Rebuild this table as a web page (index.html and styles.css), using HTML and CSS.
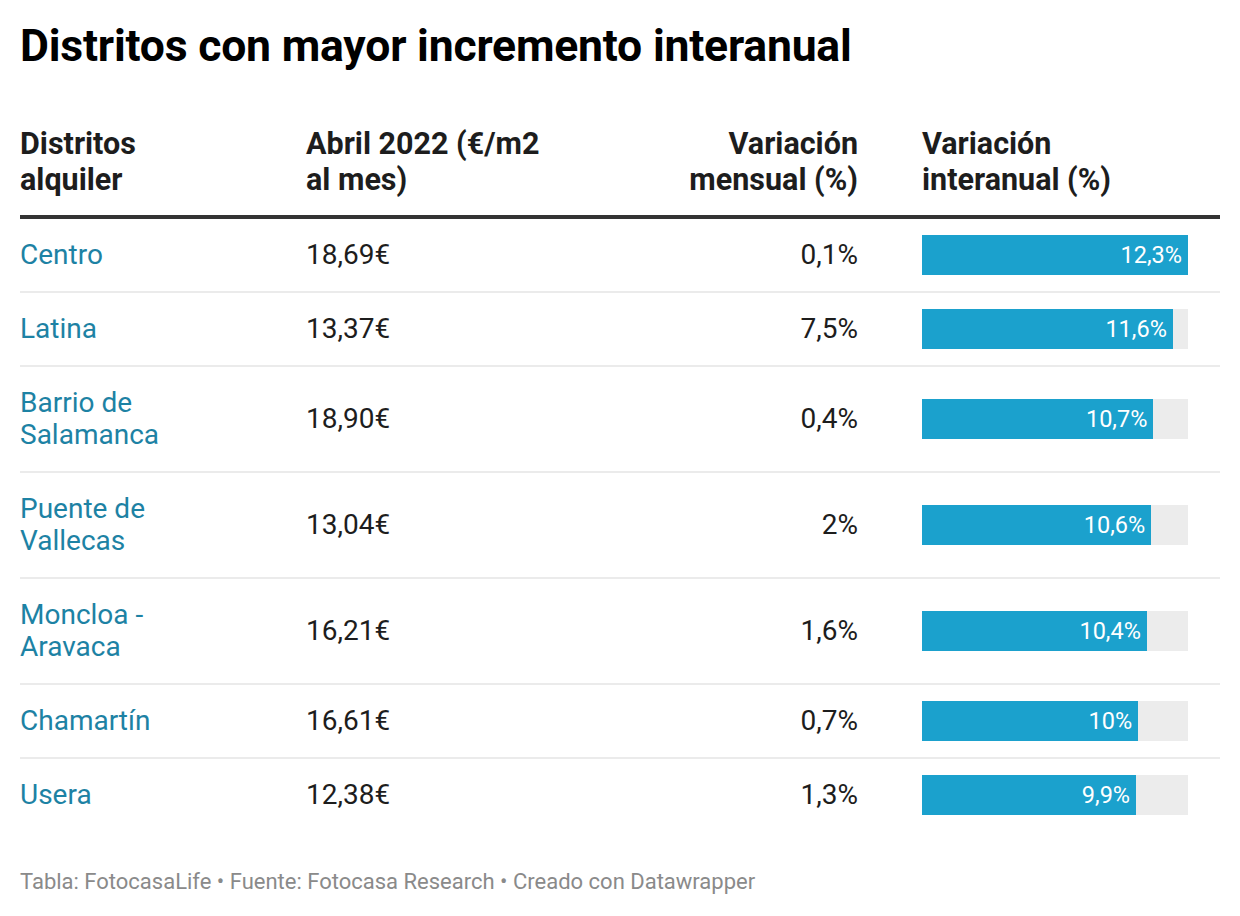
FILE: index.html
```html
<!DOCTYPE html>
<html lang="es">
<head>
<meta charset="utf-8">
<title>Distritos con mayor incremento interanual</title>
<link rel="stylesheet" href="styles.css">
</head>
<body>
<div class="chart">
  <h1 class="title">Distritos con mayor incremento interanual</h1>
  <div class="table">
    <div class="row head">
      <div class="cell">Distritos<br>alquiler</div>
      <div class="cell">Abril 2022 (€/m2<br>al mes)</div>
      <div class="cell num">Variación<br>mensual (%)</div>
      <div class="cell bar-col">Variación<br>interanual (%)</div>
    </div>
    <div class="row">
      <div class="cell name">Centro</div>
      <div class="cell">18,69€</div>
      <div class="cell num">0,1%</div>
      <div class="cell bar-col"><div class="track"><div class="bar" style="width:100%">12,3%</div></div></div>
    </div>
    <div class="row">
      <div class="cell name">Latina</div>
      <div class="cell">13,37€</div>
      <div class="cell num">7,5%</div>
      <div class="cell bar-col"><div class="track"><div class="bar" style="width:94.31%">11,6%</div></div></div>
    </div>
    <div class="row">
      <div class="cell name">Barrio de<br>Salamanca</div>
      <div class="cell">18,90€</div>
      <div class="cell num">0,4%</div>
      <div class="cell bar-col"><div class="track"><div class="bar" style="width:86.99%">10,7%</div></div></div>
    </div>
    <div class="row">
      <div class="cell name">Puente de<br>Vallecas</div>
      <div class="cell">13,04€</div>
      <div class="cell num">2%</div>
      <div class="cell bar-col"><div class="track"><div class="bar" style="width:86.18%">10,6%</div></div></div>
    </div>
    <div class="row">
      <div class="cell name">Moncloa -<br>Aravaca</div>
      <div class="cell">16,21€</div>
      <div class="cell num">1,6%</div>
      <div class="cell bar-col"><div class="track"><div class="bar" style="width:84.55%">10,4%</div></div></div>
    </div>
    <div class="row">
      <div class="cell name">Chamartín</div>
      <div class="cell">16,61€</div>
      <div class="cell num">0,7%</div>
      <div class="cell bar-col"><div class="track"><div class="bar" style="width:81.30%">10%</div></div></div>
    </div>
    <div class="row last">
      <div class="cell name">Usera</div>
      <div class="cell">12,38€</div>
      <div class="cell num">1,3%</div>
      <div class="cell bar-col"><div class="track"><div class="bar" style="width:80.49%">9,9%</div></div></div>
    </div>
  </div>
  <p class="footer">Tabla: FotocasaLife • Fuente: Fotocasa Research • Creado con Datawrapper</p>
</div>
</body>
</html>
```

FILE: styles.css
```css
html, body {
  margin: 0;
  padding: 0;
  background: #ffffff;
}

body {
  font-family: Roboto, "Liberation Sans", sans-serif;
  color: #1d1d1d;
}

.chart {
  padding: 20px 20px 0 20px;
}

.title {
  margin: 0;
  font-size: 44.5px;
  line-height: 52px;
  font-weight: 700;
  color: #000000;
  letter-spacing: -0.2px;
}

.table {
  margin-top: 54px;
}

.row {
  display: grid;
  grid-template-columns: 286px 316px 236px 298px;
  align-items: center;
  border-bottom: 2px solid #ebebeb;
  font-size: 28px;
  line-height: 32px;
  min-height: 72px;
}

.row > .cell:nth-child(4) {
  margin-left: 64px;
}

.row.last {
  border-bottom: none;
}

.row.head {
  font-size: 30.5px;
  font-weight: 700;
  line-height: 36px;
  border-bottom: 4px solid #333333;
  padding-bottom: 17px;
  align-items: end;
  min-height: 0;
}

.cell {
  padding: 20px 0;
}

.row.head .cell,
.row .bar-col {
  padding: 0;
}

.num {
  text-align: right;
}

.name {
  color: #1d82a4;
}

.track {
  width: 266px;
  height: 40px;
  background: #ececec;
}

.bar {
  height: 40px;
  background: #1ba1cd;
  color: #ffffff;
  font-size: 23.5px;
  line-height: 40px;
  text-align: right;
  padding-right: 6px;
  box-sizing: border-box;
}

.footer {
  margin: 38px 0 0 0;
  font-size: 22px;
  line-height: 26px;
  color: #8a8a8a;
}
```
